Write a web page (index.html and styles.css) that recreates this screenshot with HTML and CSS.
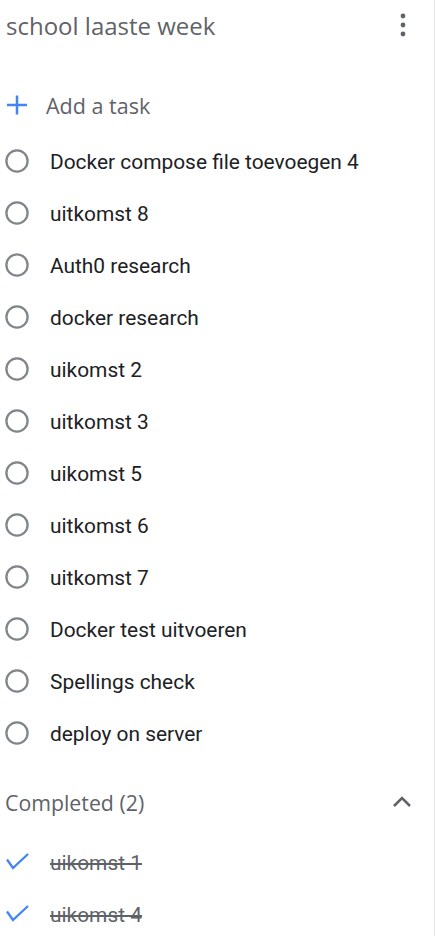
FILE: index.html
```html
<!DOCTYPE html>
<html lang="nl">
<head>
<meta charset="utf-8">
<title>Tasks</title>
<link rel="stylesheet" href="styles.css">
</head>
<body>
<div class="panel">
  <header class="header">
    <h1 class="title">school laaste week</h1>
    <button class="kebab" aria-label="Meer">
      <svg width="10" height="26" viewBox="0 0 10 26"><circle cx="5" cy="4" r="2.4"/><circle cx="5" cy="13" r="2.4"/><circle cx="5" cy="22" r="2.4"/></svg>
    </button>
  </header>

  <div class="add-row">
    <span class="icon">
      <svg width="24" height="24" viewBox="0 0 24 24"><path d="M12 2.5v19M2 12h20" stroke="#4285f4" stroke-width="2.5" fill="none"/></svg>
    </span>
    <span class="add-label">Add a task</span>
  </div>

  <ul class="tasks">
    <li class="task"><span class="icon"><svg width="24" height="24" viewBox="0 0 24 24"><circle cx="12" cy="12" r="10.6" class="ring"/></svg></span><span class="task-text">Docker compose file toevoegen 4</span></li>
    <li class="task"><span class="icon"><svg width="24" height="24" viewBox="0 0 24 24"><circle cx="12" cy="12" r="10.6" class="ring"/></svg></span><span class="task-text">uitkomst 8</span></li>
    <li class="task"><span class="icon"><svg width="24" height="24" viewBox="0 0 24 24"><circle cx="12" cy="12" r="10.6" class="ring"/></svg></span><span class="task-text">Auth0 research</span></li>
    <li class="task"><span class="icon"><svg width="24" height="24" viewBox="0 0 24 24"><circle cx="12" cy="12" r="10.6" class="ring"/></svg></span><span class="task-text">docker research</span></li>
    <li class="task"><span class="icon"><svg width="24" height="24" viewBox="0 0 24 24"><circle cx="12" cy="12" r="10.6" class="ring"/></svg></span><span class="task-text">uikomst 2</span></li>
    <li class="task"><span class="icon"><svg width="24" height="24" viewBox="0 0 24 24"><circle cx="12" cy="12" r="10.6" class="ring"/></svg></span><span class="task-text">uitkomst 3</span></li>
    <li class="task"><span class="icon"><svg width="24" height="24" viewBox="0 0 24 24"><circle cx="12" cy="12" r="10.6" class="ring"/></svg></span><span class="task-text">uikomst 5</span></li>
    <li class="task"><span class="icon"><svg width="24" height="24" viewBox="0 0 24 24"><circle cx="12" cy="12" r="10.6" class="ring"/></svg></span><span class="task-text">uitkomst 6</span></li>
    <li class="task"><span class="icon"><svg width="24" height="24" viewBox="0 0 24 24"><circle cx="12" cy="12" r="10.6" class="ring"/></svg></span><span class="task-text">uitkomst 7</span></li>
    <li class="task"><span class="icon"><svg width="24" height="24" viewBox="0 0 24 24"><circle cx="12" cy="12" r="10.6" class="ring"/></svg></span><span class="task-text">Docker test uitvoeren</span></li>
    <li class="task"><span class="icon"><svg width="24" height="24" viewBox="0 0 24 24"><circle cx="12" cy="12" r="10.6" class="ring"/></svg></span><span class="task-text">Spellings check</span></li>
    <li class="task"><span class="icon"><svg width="24" height="24" viewBox="0 0 24 24"><circle cx="12" cy="12" r="10.6" class="ring"/></svg></span><span class="task-text">deploy on server</span></li>
  </ul>

  <div class="completed-head">
    <span class="completed-label">Completed (2)</span>
    <svg class="chevron" width="24" height="24" viewBox="0 0 24 24"><path d="M4 16l8-8 8 8" stroke="#5f6368" stroke-width="2.5" fill="none"/></svg>
  </div>

  <ul class="tasks done">
    <li class="task"><span class="icon"><svg width="24" height="24" viewBox="0 0 24 24"><path d="M2 9.5l6 8.5L23 4" stroke="#4285f4" stroke-width="2.3" fill="none"/></svg></span><span class="task-text done-text">uikomst 1</span></li>
    <li class="task"><span class="icon"><svg width="24" height="24" viewBox="0 0 24 24"><path d="M2 9.5l6 8.5L23 4" stroke="#4285f4" stroke-width="2.3" fill="none"/></svg></span><span class="task-text done-text">uikomst 4</span></li>
  </ul>
</div>
</body>
</html>
```

FILE: styles.css
```css
* { box-sizing: border-box; }
html, body { margin: 0; padding: 0; background: #fff; }
body { font-family: Roboto, "Liberation Sans", sans-serif; }

.panel {
  width: 435px;
  min-height: 936px;
  border-right: 1px solid #e3e3e3;
  overflow: hidden;
}

.header {
  height: 50px;
  display: flex;
  align-items: center;
  justify-content: space-between;
  padding-left: 6px;
  padding-right: 26px;
}
.title {
  margin: 0;
  font-family: "Open Sans", Roboto, sans-serif;
  font-weight: 400;
  font-size: 24px;
  color: #5f6368;
}
.kebab {
  border: 0;
  background: none;
  padding: 0;
  width: 10px;
  height: 26px;
  display: flex;
  fill: #5f6368;
}

.add-row {
  margin-top: 29px;
  height: 52px;
  display: flex;
  align-items: center;
  padding-left: 5px;
}
.add-label {
  font-family: "Open Sans", Roboto, sans-serif;
  font-size: 21.5px;
  color: #5f6368;
}

.icon {
  width: 24px;
  height: 24px;
  display: flex;
}
.add-row .icon { margin-right: 17px; }
.ring { fill: none; stroke: #80868b; stroke-width: 2.3; }

.tasks {
  list-style: none;
  margin: 4px 0 0;
  padding: 0;
}
.task {
  height: 52px;
  display: flex;
  align-items: center;
  padding-left: 5px;
}
.task .icon { margin-right: 21px; }
.task-text {
  font-size: 20.9px;
  color: #202124;
  padding-top: 1px;
}

.completed-head {
  margin-top: 17px;
  height: 52px;
  display: flex;
  align-items: center;
  justify-content: space-between;
  padding-left: 5px;
  padding-right: 20px;
}
.completed-label {
  font-family: "Open Sans", Roboto, sans-serif;
  font-size: 21.3px;
  color: #5f6368;
}
.chevron { display: block; }

.tasks.done { margin-top: 8px; }
.done-text {
  color: #5f6368;
  text-decoration: line-through;
}
```
